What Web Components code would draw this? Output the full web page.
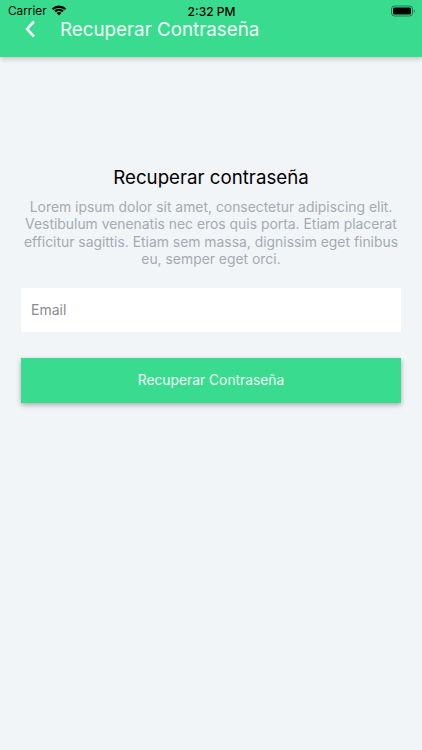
<!DOCTYPE html>
<html lang="es">
<head>
<meta charset="utf-8">
<title>Recuperar Contraseña</title>
<style>
  html, body { margin: 0; height: 100%; }
  body { background: #f1f5f8; font-family: Inter, "Liberation Sans", sans-serif; overflow: hidden; }
</style>
</head>
<body>
<app-header>Recuperar Contraseña</app-header>
<recover-form>
  <span slot="title">Recuperar contraseña</span>
  <span slot="text">Lorem ipsum dolor sit amet, consectetur adipiscing elit. Vestibulum venenatis nec eros quis porta. Etiam placerat efficitur sagittis. Etiam sem massa, dignissim eget finibus eu, semper eget orci.</span>
</recover-form>

<script>
class StatusBar extends HTMLElement {
  constructor() {
    super();
    this.attachShadow({ mode: "open" }).innerHTML = `
      <style>
        :host { display: grid; grid-template-columns: 1fr auto 1fr; align-items: center; height: 20px; padding: 1px 7px 0 8px; color: #000; font-size: 11.800px; }
        .left { display: flex; align-items: center; gap: 4px; }
        .time { font-weight: 500; font-size: 12px; }
        .right { display: flex; justify-content: flex-end; }
        svg { display: block; }
      </style>
      <div class="left">
        <span>Carrier</span>
        <svg width="16" height="12" viewBox="0 0 16 12"><path d="M8 2.900c2.200 0 4.200.8 5.700 2.200l1.600-1.700A10.600 10.600 0 0 0 8 .5 10.600 10.600 0 0 0 .7 3.400l1.600 1.700A8.300 8.300 0 0 1 8 2.900z"/><path d="M8 6.100c1.200 0 2.300.4 3.200 1.200l1.600-1.700A7 7 0 0 0 8 3.700a7 7 0 0 0-4.800 1.900l1.600 1.700c.9-.8 2-1.200 3.200-1.200z"/><path d="M8 6.900c-1 0-1.800.3-2.500 1L8 10.600l2.500-2.700c-.7-.7-1.500-1-2.500-1z"/></svg>
      </div>
      <span class="time">2:32 PM</span>
      <div class="right">
        <svg width="24" height="12" viewBox="0 0 24 12"><rect x="0.500" y="1" width="21" height="10" rx="3" fill="none" stroke="#000" stroke-opacity=".45"/><rect x="2" y="2.500" width="18" height="7" rx="1.500"/><path d="M22.800 4.500c.7.200 1 .8 1 1.500s-.3 1.300-1 1.500z" fill-opacity=".45"/></svg>
      </div>`;
  }
}

class AppHeader extends HTMLElement {
  constructor() {
    super();
    this.attachShadow({ mode: "open" }).innerHTML = `
      <style>
        :host { display: block; height: 57px; box-sizing: border-box; background: #39dc8f; box-shadow: 0 2px 5px rgba(0,0,0,.2); position: relative; }
        .nav { display: flex; align-items: center; height: 20px; margin-top: -2px; padding-left: 25px; color: #f2fff8; }
        svg { display: block; flex: none; }
        .title { margin-left: 24px; font-size: 18.800px; white-space: nowrap; }
      </style>
      <status-bar></status-bar>
      <div class="nav">
        <svg width="11" height="18" viewBox="0 0 11 18"><path d="M9 1.500 2 9l7 7.500" fill="none" stroke="currentColor" stroke-width="2.600"/></svg>
        <span class="title"><slot></slot></span>
      </div>`;
  }
}

class RecoverForm extends HTMLElement {
  constructor() {
    super();
    this.attachShadow({ mode: "open" }).innerHTML = `
      <style>
        :host { display: block; padding: 109px 21px 0; }
        h1 { margin: 0; font-weight: 400; font-size: 18.700px; line-height: 24px; color: #000; text-align: center; }
        p { margin: 9px 0 0; font-size: 13.900px; line-height: 17.300px; color: #a5abb2; text-align: center; }
        text-field { margin-top: 19.500px; }
        action-button { margin-top: 26px; }
      </style>
      <h1><slot name="title"></slot></h1>
      <p><slot name="text"></slot></p>
      <text-field placeholder="Email"></text-field>
      <action-button>Recuperar Contraseña</action-button>`;
  }
}

class TextField extends HTMLElement {
  constructor() {
    super();
    this.attachShadow({ mode: "open" }).innerHTML = `
      <style>
        :host { display: flex; align-items: center; height: 44.500px; padding: 0 10px; background: #fff; color: #8b8b8d; font-size: 14px; }
      </style>
      <span>${this.getAttribute("placeholder")}</span>`;
  }
}

class ActionButton extends HTMLElement {
  constructor() {
    super();
    this.attachShadow({ mode: "open" }).innerHTML = `
      <style>
        :host { display: flex; align-items: center; justify-content: center; height: 44.500px; background: #39dc8f; color: #f2fff8; font-size: 13.800px; box-shadow: 0 2px 5px rgba(0,0,0,.3); }
      </style>
      <slot></slot>`;
  }
}

customElements.define("status-bar", StatusBar);
customElements.define("app-header", AppHeader);
customElements.define("text-field", TextField);
customElements.define("action-button", ActionButton);
customElements.define("recover-form", RecoverForm);
</script>
</body>
</html>
